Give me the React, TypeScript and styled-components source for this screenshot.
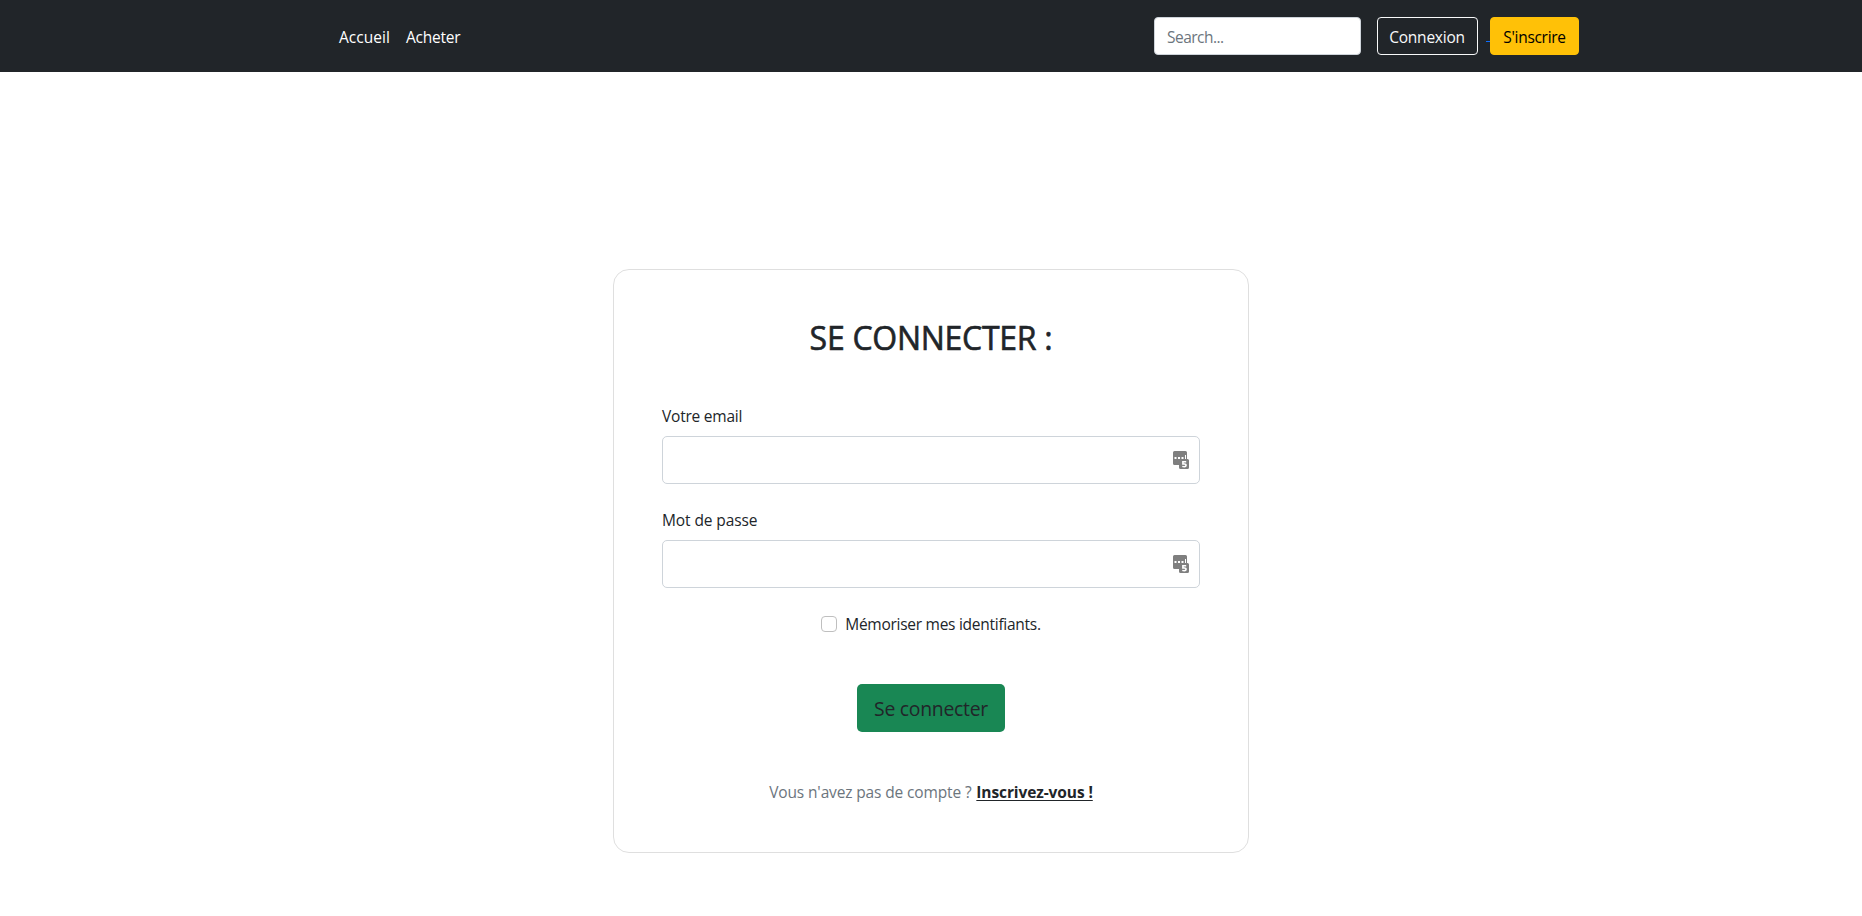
import React from "react";
import styled, { createGlobalStyle } from "styled-components";

const GlobalStyle = createGlobalStyle`
  *, *::before, *::after { box-sizing: border-box; }
  body {
    margin: 0;
    background: #fff;
    color: #212529;
    font-family: "Open Sans", "Noto Sans", sans-serif;
    font-size: 15.5px;
    line-height: 24px;
  }
`;

const Header = styled.header`
  height: 72px;
  background: #212529;
`;

const HeaderInner = styled.div`
  display: flex;
  align-items: center;
  width: 1320px;
  height: 100%;
  margin: 0 auto;
  padding: 0 12px 0 60px;
`;

const Nav = styled.nav`
  display: flex;
  flex: 1;
`;

const NavLink = styled.a<{ $width: number; $spacing: number }>`
  width: ${(p) => p.$width}px;
  padding: 9px 8px 7px;
  color: #fff;
  white-space: nowrap;
  text-decoration: none;
  letter-spacing: ${(p) => p.$spacing}px;
`;

const SearchInput = styled.input`
  width: 207px;
  height: 38px;
  margin-right: 16px;
  padding: 7px 12px 5px;
  border: 1px solid #ced4da;
  border-radius: 4px;
  background: #fff;
  color: #212529;
  font: inherit;
  letter-spacing: -0.52px;
  &::placeholder { color: #6c757d; opacity: 1; }
`;

const HeaderButton = styled.button<{ $primary?: boolean }>`
  width: ${(p) => (p.$primary ? 89 : 101)}px;
  height: 38px;
  padding: ${(p) => (p.$primary ? "1px 0 0" : "1px 1px 0 0")};
  border: 1px solid ${(p) => (p.$primary ? "#ffc107" : "#f8f9fa")};
  border-radius: 4px;
  background: ${(p) => (p.$primary ? "#ffc107" : "transparent")};
  color: ${(p) => (p.$primary ? "#000" : "#f8f9fa")};
  font: inherit;
  letter-spacing: ${(p) => (p.$primary ? -0.3 : -0.22)}px;
`;

const LinkGap = styled.span`
  width: 4px;
  height: 1px;
  margin: 11px 0 0 8px;
  background: #0d6efd;
`;

const Main = styled.main`
  display: flex;
  justify-content: center;
  padding-top: 197px;
`;

const Card = styled.form`
  display: flex;
  flex-direction: column;
  align-items: center;
  width: 636px;
  height: 584px;
  padding: 48px;
  border: 1px solid #dfdfdf;
  border-radius: 16px;
  background: #fff;
`;

const Title = styled.h2`
  margin: 0 0 47px;
  padding-top: 1px;
  font-size: 32px;
  font-weight: 500;
  line-height: 38px;
  letter-spacing: -0.28px;
  -webkit-text-stroke: 0.6px #212529;
`;

const Field = styled.div`
  width: 100%;
  margin-bottom: 24px;
`;

const Label = styled.label<{ $spacing: number }>`
  display: block;
  margin-bottom: 8px;
  letter-spacing: ${(p) => p.$spacing}px;
`;

const InputFrame = styled.div`
  display: flex;
  align-items: center;
  height: 48px;
  padding-right: 10px;
  border: 1px solid #ced4da;
  border-radius: 5px;
`;

const FieldInput = styled.input`
  flex: 1;
  min-width: 0;
  height: 100%;
  padding: 8px 16px;
  border: 0;
  outline: 0;
  background: transparent;
  font: inherit;
`;

const Remember = styled.label`
  display: flex;
  align-items: center;
  gap: 8px;
  height: 24px;
  margin-bottom: 48px;
  letter-spacing: -0.27px;
`;

const Checkbox = styled.input`
  appearance: none;
  width: 16px;
  height: 16px;
  margin: 0;
  border: 1px solid #bfbfbf;
  border-radius: 4px;
  background: #fff;
`;

const Submit = styled.button`
  width: 148px;
  height: 48px;
  margin-bottom: 48px;
  padding: 2px 0 0;
  border: 0;
  border-radius: 5px;
  background: #198754;
  color: #212529;
  font-family: inherit;
  font-size: 19.4px;
  line-height: 30px;
  letter-spacing: -0.28px;
`;

const Footnote = styled.p`
  margin: 0;
  color: #6c757d;
  white-space: nowrap;
  letter-spacing: -0.14px;
`;

const SignUpLink = styled.a`
  margin-left: 1px;
  color: #212529;
  font-weight: 700;
  letter-spacing: -0.1px;
  text-decoration: underline;
  text-decoration-thickness: 1px;
  text-underline-offset: 2px;
`;

const PasswordManagerIcon = () => (
  <svg width="16" height="18" viewBox="0 0 16 18">
    <path
      fill="#7f7f7f"
      d="M1.5 0h11A1.5 1.5 0 0 1 14 1.5V8h.5A1.5 1.5 0 0 1 16 9.5v7a1.5 1.5 0 0 1-1.5 1.5h-7A1.5 1.5 0 0 1 6 16.5V14H1.5A1.5 1.5 0 0 1 0 12.5v-11A1.5 1.5 0 0 1 1.5 0Z"
    />
    <path fill="#fff" d="M1.5 6h2v2h-2zM5 6h2v2H5zM8.500 6h2v2h-2zM12 4h1v4h-1z" />
    <path fill="none" stroke="#fff" strokeWidth="1.6" d="M13.2 10.800H9.900V13h1.500c2.300 0 2.100 2.800-.1 2.800-.8 0-1.400-.1-2-.4" />
  </svg>
);

const TextField = ({ id, type, label, spacing }: { id: string; type: string; label: string; spacing: number }) => (
  <Field>
    <Label htmlFor={id} $spacing={spacing}>{label}</Label>
    <InputFrame>
      <FieldInput id={id} type={type} />
      <PasswordManagerIcon />
    </InputFrame>
  </Field>
);

export default function App() {
  return (
    <>
      <GlobalStyle />
      <Header>
        <HeaderInner>
          <Nav>
            <NavLink $width={67} $spacing={0.05}>Accueil</NavLink>
            <NavLink $width={72} $spacing={-0.22}>Acheter</NavLink>
          </Nav>
          <SearchInput type="search" placeholder="Search..." />
          <HeaderButton>Connexion</HeaderButton>
          <LinkGap />
          <HeaderButton $primary>S'inscrire</HeaderButton>
        </HeaderInner>
      </Header>
      <Main>
        <Card>
          <Title>SE CONNECTER :</Title>
          <TextField id="email" type="email" label="Votre email" spacing={-0.22} />
          <TextField id="password" type="password" label="Mot de passe" spacing={-0.1} />
          <Remember>
            <Checkbox type="checkbox" />
            Mémoriser mes identifiants.
          </Remember>
          <Submit type="button">Se connecter</Submit>
          <Footnote>
            Vous n'avez pas de compte ? <SignUpLink>Inscrivez-vous !</SignUpLink>
          </Footnote>
        </Card>
      </Main>
    </>
  );
}
